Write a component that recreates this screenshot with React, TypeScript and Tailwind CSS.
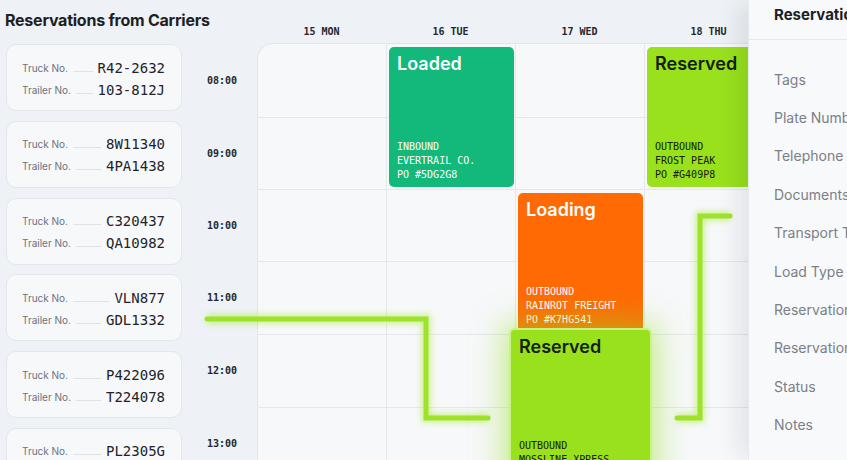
const mono = "font-['DejaVu_Sans_Mono',monospace]";

const carriers = [
  { truck: "R42-2632", trailer: "103-812J" },
  { truck: "8W11340", trailer: "4PA1438" },
  { truck: "C320437", trailer: "QA10982" },
  { truck: "VLN877", trailer: "GDL1332" },
  { truck: "P422096", trailer: "T224078" },
  { truck: "PL2305G", trailer: "RT88214" },
];

const days = ["15 MON", "16 TUE", "17 WED", "18 THU", "19 FRI"];
const hours = ["08:00", "09:00", "10:00", "11:00", "12:00", "13:00"];
const rowHeights = ["h-[74px]", "h-[72px]", "h-[72px]", "h-[73px]", "h-[73px]", "h-[73px]"];

const colStart = ["col-start-1", "col-start-2", "col-start-3", "col-start-4", "col-start-5"];
const rowStart = ["row-start-1", "row-start-2", "row-start-3", "row-start-4", "row-start-5", "row-start-6"];

const fields = [
  "Tags",
  "Plate Number",
  "Telephone",
  "Documents",
  "Transport Type",
  "Load Type",
  "Reservation Date",
  "Reservation Time",
  "Status",
  "Notes",
];

function CarrierCard({ truck, trailer }: { truck: string; trailer: string }) {
  return (
    <div className="h-[67px] shrink-0 rounded-[10px] border border-[#e3e6ea] bg-[#f7f8fa] pl-[15px] pr-[16px] pt-[12px]">
      {[
        ["Truck No.", truck],
        ["Trailer No.", trailer],
      ].map(([label, value]) => (
        <div key={label} className="flex h-[22px] items-center">
          <span className="text-[10px] text-[#6b7280]">{label}</span>
          <span className="mx-[5px] mt-[6px] h-px flex-1 bg-[#dfe2e6]" />
          <span className={`${mono} text-[14px] text-[#1f2329]`}>{value}</span>
        </div>
      ))}
    </div>
  );
}

function EventDetails({ lines }: { lines: string[] }) {
  return (
    <div className={`${mono} text-[10px] leading-[14px]`}>
      {lines.map((l) => (
        <div key={l} className="whitespace-nowrap">
          {l}
        </div>
      ))}
    </div>
  );
}

export default function App() {
  return (
    <div className="relative flex h-[460px] w-[847px] overflow-hidden bg-[#eef1f5] font-['Inter',sans-serif] text-[#1c1f24]">
      {/* carrier list */}
      <div className="flex w-[190px] shrink-0 flex-col pl-[6px] pr-[8px]">
        <div className="flex h-[44px] shrink-0 items-center pb-[4px]">
          <h1 className="-ml-[1px] whitespace-nowrap text-[16px] font-bold tracking-[-0.015em] text-[#1c1f24]">
            Reservations from Carriers
          </h1>
        </div>
        <div className="flex shrink-0 flex-col gap-[9.8px]">
          {carriers.map((c) => (
            <CarrierCard key={c.truck} {...c} />
          ))}
        </div>
      </div>

      {/* week calendar */}
      <div className="flex shrink-0 flex-col">
        <div className="flex h-[43px] shrink-0">
          <div className="w-[67px] shrink-0" />
          {days.map((d) => (
            <div
              key={d}
              className={`${mono} flex w-[129px] shrink-0 items-end justify-center pb-[4px] text-[10px] font-bold text-[#24282e]`}
            >
              {d}
            </div>
          ))}
        </div>

        <div className="flex shrink-0">
          <div className="flex w-[67px] shrink-0 flex-col">
            {hours.map((h, i) => (
              <div
                key={h}
                className={`${rowHeights[i]} ${mono} flex shrink-0 items-center justify-center pr-[3px] text-[10px] font-bold text-[#24282e]`}
              >
                {h}
              </div>
            ))}
          </div>

          <div className="relative grid grid-cols-[repeat(5,129px)] grid-rows-[74px_72px_72px_73px_73px_73px] rounded-tl-[16px] border-l border-t border-[#e2e5ea] bg-[#f7f8fa]">
            {hours.map((h, r) =>
              days.map((d, c) => (
                <div
                  key={`${h}-${d}`}
                  className={`${colStart[c]} ${rowStart[r]} border-b border-r border-[#e4e7eb] ${
                    r === 0 && c === 0 ? "rounded-tl-[16px]" : ""
                  }`}
                />
              ))
            )}

            <div className="col-start-2 row-start-1 row-span-2 mx-[2px] my-[3px] flex flex-col justify-between rounded-[5px] bg-[#12b97a] px-[8px] pb-[5px] pt-[5px] text-white">
              <div className="text-[18px] font-semibold leading-[24px]">Loaded</div>
              <EventDetails lines={["INBOUND", "EVERTRAIL CO.", "PO #5DG2G8"]} />
            </div>

            <div className="col-start-4 row-start-1 row-span-2 mx-[2px] my-[3px] flex flex-col justify-between rounded-[5px] bg-[#98e11c] px-[8px] pb-[5px] pt-[5px] text-[#142008]">
              <div className="text-[18px] font-semibold leading-[24px]">Reserved</div>
              <EventDetails lines={["OUTBOUND", "FROST PEAK", "PO #G409P8"]} />
            </div>

            <div className="col-start-3 row-start-3 row-span-2 mx-[2px] my-[3px] flex flex-col justify-between rounded-[5px] bg-[#ff6a05] px-[8px] pb-[5px] pt-[5px] text-white">
              <div className="text-[18px] font-semibold leading-[24px]">Loading</div>
              <EventDetails lines={["OUTBOUND", "RAINROT FREIGHT", "PO #K7HG541"]} />
            </div>

            {/* card being dragged */}
            <div className="absolute left-[251px] top-[284px] z-30 flex h-[160px] w-[143px] flex-col justify-between rounded-[6px] border-2 border-[#c9f383] bg-[#98e11c] px-[8px] pb-[5px] pt-[5px] text-[#142008] shadow-[0_0_30px_6px_rgba(150,226,30,0.5)]">
              <div className="text-[18px] font-semibold leading-[24px]">Reserved</div>
              <EventDetails lines={["OUTBOUND", "MOSSLINE XPRESS", "PO #L2M8Q04"]} />
            </div>
          </div>
        </div>
      </div>

      {/* drag path */}
      <svg
        className="pointer-events-none absolute left-0 top-0 z-20"
        width="847"
        height="460"
        viewBox="0 0 847 460"
        fill="none"
      >
        <defs>
          <filter id="glow" x="-10%" y="-10%" width="120%" height="120%">
            <feGaussianBlur stdDeviation="3" />
          </filter>
        </defs>
        {["M207 319 H426 V418 H488", "M730 216 H700 V418 H677"].map((d) => (
          <g key={d}>
            <path d={d} stroke="#a6ea3a" strokeWidth="9" opacity="0.55" filter="url(#glow)" />
            <path d={d} stroke="#9ee32a" strokeWidth="5" strokeLinecap="round" />
          </g>
        ))}
      </svg>

      {/* details drawer */}
      <aside className="absolute right-0 top-0 z-40 h-full w-[99px] overflow-hidden border-l border-[#e6e9ed] bg-[#f8f9fb] shadow-[-14px_0_22px_-4px_rgba(15,23,42,0.09)]">
        <div className="flex h-[40px] items-center whitespace-nowrap border-b border-[#e4e7eb] pb-[8px] pl-[25px] text-[15px] font-bold text-[#1c1f24]">
          Reservation Details
        </div>
        <div className="pt-[20px]">
          {fields.map((f, i) => (
            <div
              key={`${f}-${i}`}
              className="flex h-[38.4px] items-center whitespace-nowrap pl-[25px] text-[14px] text-[#7a7f88]"
            >
              {f}
            </div>
          ))}
        </div>
      </aside>
    </div>
  );
}
